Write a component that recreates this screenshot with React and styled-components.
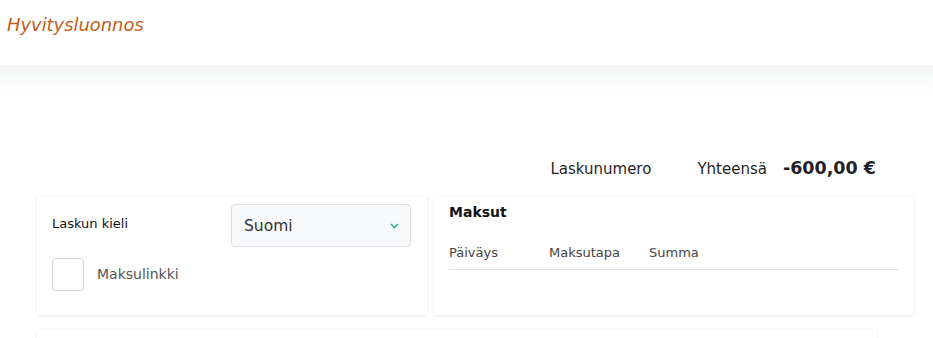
import React from "react";
import styled, { createGlobalStyle } from "styled-components";

const Global = createGlobalStyle`
  html, body { margin: 0; padding: 0; background: #fff; }
  body { font-family: "DejaVu Sans", "Noto Sans", sans-serif; color: #1f1f1f; overflow: hidden; }
  * { box-sizing: border-box; }
`;

const Header = styled.header`
  height: 65px;
  background: #fff;
  padding: 15px 7px 0;
`;

const Title = styled.h1`
  margin: 0;
  font-size: 17.9px;
  line-height: 20px;
  font-weight: 400;
  font-style: italic;
  color: #c05c1a;
`;

const Main = styled.main`
  min-height: 273px;
  padding: 92px 0 0 37px;
  background: linear-gradient(to bottom, #f2f3f5 0, #f9fafa 12px, #fdfdfd 22px, #fff 30px);
`;

const Container = styled.div`
  width: 840px;
`;

const Summary = styled.div`
  display: flex;
  justify-content: flex-end;
  align-items: baseline;
  height: 22px;
  line-height: 22px;
  padding-right: 1px;
  margin-bottom: 17px;
`;

const SummaryLabel = styled.span`
  font-size: 15px;
  color: #1f1f1f;
  margin-right: ${(p) => p.$gap}px;
`;

const Amount = styled.span`
  font-size: 17.5px;
  font-weight: 700;
  color: #1e1f2a;
`;

const CardRow = styled.div`
  display: flex;
  gap: 7px;
  margin-bottom: 14px;
`;

const Card = styled.section`
  flex: none;
  width: ${(p) => p.$w}px;
  height: ${(p) => p.$h}px;
  background: #fff;
  box-shadow: 0 1px 3px rgba(0, 0, 0, 0.09), 0 0 1px rgba(0, 0, 0, 0.05);
  padding: 8px 15px 0;
`;

const FieldRow = styled.div`
  display: flex;
  justify-content: space-between;
  align-items: flex-start;
`;

const FieldLabel = styled.span`
  font-size: 13px;
  line-height: 16px;
  margin-top: 12px;
  color: #111;
`;

const Select = styled.div`
  width: 180px;
  height: 43px;
  margin-right: 1px;
  border: 1px solid #dcdde0;
  border-radius: 4px;
  background: #f8f9fa;
  display: flex;
  align-items: center;
  justify-content: space-between;
  padding: 0 11px 0 12px;
  font-size: 15.5px;
  line-height: 18px;
  color: #333;
`;

const CheckRow = styled.label`
  display: flex;
  align-items: center;
  gap: 13px;
  margin-top: 11px;
  font-size: 14px;
  line-height: 17px;
  color: #555;
`;

const Box = styled.span`
  width: 32px;
  height: 33px;
  border: 1px solid #cfd1d4;
  border-radius: 4px;
  background: #fff;
`;

const CardTitle = styled.h2`
  margin: 0;
  font-size: 14px;
  line-height: 17px;
  font-weight: 700;
  color: #111;
`;

const TableHead = styled.div`
  display: grid;
  grid-template-columns: 100px 100px 100px 1fr;
  margin-top: 24px;
  width: 450px;
  padding-bottom: 8px;
  border-bottom: 1px solid #e2e3e5;
  font-size: 13px;
  line-height: 16px;
  color: #444;
`;

const Chevron = () => (
  <svg width="9" height="6" viewBox="0 0 9 6">
    <path d="M1 1l3.5 3.5L8 1" fill="none" stroke="#2bb596" strokeWidth="1.6" />
  </svg>
);

export default function App() {
  return (
    <>
      <Global />
      <Header>
        <Title>Hyvitysluonnos</Title>
      </Header>
      <Main>
        <Container>
          <Summary>
            <SummaryLabel $gap={46}>Laskunumero</SummaryLabel>
            <SummaryLabel $gap={16}>Yhteensä</SummaryLabel>
            <Amount>-600,00 €</Amount>
          </Summary>
          <CardRow>
            <Card $w={390} $h={119}>
              <FieldRow>
                <FieldLabel>Laskun kieli</FieldLabel>
                <Select>
                  <span>Suomi</span>
                  <Chevron />
                </Select>
              </FieldRow>
              <CheckRow>
                <Box />
                Maksulinkki
              </CheckRow>
            </Card>
            <Card $w={480} $h={119}>
              <CardTitle>Maksut</CardTitle>
              <TableHead>
                <span>Päiväys</span>
                <span>Maksutapa</span>
                <span>Summa</span>
              </TableHead>
            </Card>
          </CardRow>
          <Card $w={840} $h={60} />
        </Container>
      </Main>
    </>
  );
}
